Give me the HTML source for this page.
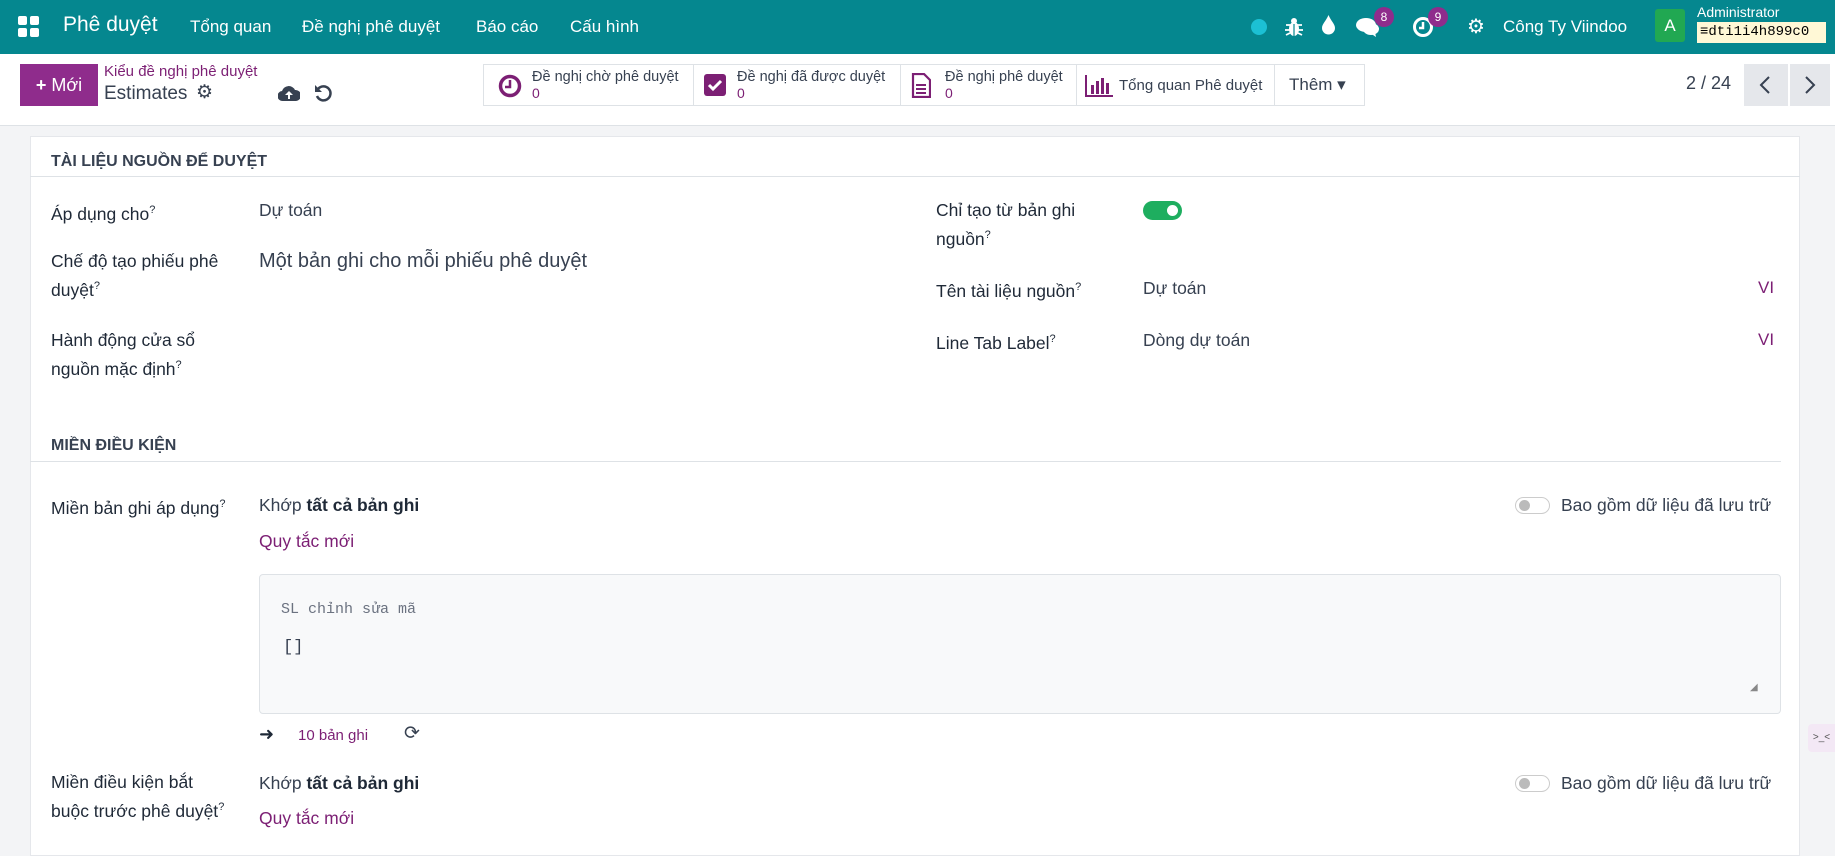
<!DOCTYPE html>
<html><head><meta charset="utf-8"><style>
*{box-sizing:border-box;margin:0;padding:0}
body{width:1835px;height:839px;overflow:hidden;background:#f3f4f6;font-family:"Liberation Sans",sans-serif;color:#374151;position:relative}
.a{position:absolute;white-space:nowrap}
.nav{position:absolute;left:0;top:0;width:1835px;height:54px;background:#05878f;color:#fff}
.nav .a{font-size:17px;top:17px}
.cp{position:absolute;left:0;top:54px;width:1835px;height:72px;background:#fff;border-bottom:1px solid #dee2e6}
.sheet{position:absolute;left:30px;top:136px;width:1770px;height:720px;background:#fff;border:1px solid #e5e7eb}
.lab{font-size:17.5px;color:#1f2937;line-height:25px}
.val{font-size:17.5px;color:#374151}
.sec{font-size:16px;font-weight:bold;color:#374151}
sup{font-size:11px}
.pur{color:#7c1f74}
.sb{position:absolute;top:64px;height:42px;border:1px solid #dee2e6;background:#fff}
.sb .t{position:absolute;font-size:14.5px;color:#374151;top:4px;white-space:nowrap}
.sb .n{position:absolute;font-size:14px;color:#7c1f74;top:20px}
.tog{position:absolute;width:35px;height:17px;border-radius:9px;border:1px solid #ccc;background:#fff}
.tog:after{content:"";position:absolute;left:3px;top:2px;width:11px;height:11px;border-radius:50%;background:#bbb}
.badge{position:absolute;width:20px;height:20px;border-radius:10px;background:#8f2c8c;color:#fff;font-size:12px;text-align:center;line-height:20px}
</style></head><body>
<div class="nav">
 <svg class="a" style="left:18px;top:16px" width="21" height="21" viewBox="0 0 21 21" fill="#fff"><rect x="0" y="0" width="9" height="9" rx="2"/><rect x="12" y="0" width="9" height="9" rx="2"/><rect x="0" y="12" width="9" height="9" rx="2"/><rect x="12" y="12" width="9" height="9" rx="2"/></svg>
 <div class="a" style="left:63px;top:13px;font-size:21px">Phê duyệt</div>
 <div class="a" style="left:190px">Tổng quan</div>
 <div class="a" style="left:302px">Đề nghị phê duyệt</div>
 <div class="a" style="left:476px">Báo cáo</div>
 <div class="a" style="left:570px">Cấu hình</div>
 <div class="a" style="left:1251px;top:19px;width:16px;height:16px;border-radius:50%;background:#1cc0d4"></div>
 <svg class="a" style="left:1285px;top:17px" width="18" height="20" viewBox="0 0 18 20"><ellipse cx="9" cy="12" rx="5" ry="7" fill="#fff"/><circle cx="9" cy="4" r="3" fill="#fff"/><path d="M1 8h16M0 13h18M1 18l4-2M17 18l-4-2" stroke="#fff" stroke-width="1.8"/><path d="M9 7v12" stroke="#05878f" stroke-width="1.2"/></svg>
 <svg class="a" style="left:1322px;top:15px" width="13" height="20" viewBox="0 0 13 20"><path d="M6.5 0C4 6 0 9 0 13a6.5 6.5 0 0013 0C13 9 9 6 6.5 0z" fill="#fff"/></svg>
 <svg class="a" style="left:1356px;top:17px" width="24" height="20" viewBox="0 0 24 20"><ellipse cx="10" cy="8" rx="10" ry="7" fill="#fff"/><ellipse cx="15" cy="12" rx="8" ry="6" fill="#fff"/><path d="M14 16l6 4-1-5z" fill="#fff"/></svg>
 <div class="badge" style="left:1374px;top:7px">8</div>
 <svg class="a" style="left:1412px;top:16px" width="22" height="22" viewBox="0 0 22 22"><circle cx="11" cy="11" r="8.5" fill="none" stroke="#fff" stroke-width="3"/><path d="M11 6v6h-4" stroke="#fff" stroke-width="2.5" fill="none"/></svg>
 <div class="badge" style="left:1428px;top:7px">9</div>
 <div class="a" style="left:1467px;top:14px;font-size:20px">⚙</div>
 <div class="a" style="left:1503px">Công Ty Viindoo</div>
 <div class="a" style="left:1655px;top:9px;width:30px;height:33px;background:#21a852;border-radius:3px;text-align:center;line-height:33px;font-size:17px">A</div>
 <div class="a" style="left:1697px;top:4px;font-size:14px">Administrator</div>
 <div class="a" style="left:1697px;top:22px;width:129px;height:21px;background:#fff8d6;color:#000;font-family:'Liberation Mono',monospace;font-size:14px;line-height:21px;padding-left:3px">≡dti1i4h899c0</div>
</div>
<div class="cp">
 <div class="a" style="left:20px;top:10px;width:78px;height:42px;background:#8f2c8c;color:#fff;font-size:18px;line-height:42px;text-align:center"><b>+</b> Mới</div>
 <div class="a pur" style="left:104px;top:9px;font-size:15px">Kiểu đề nghị phê duyệt</div>
 <div class="a" style="left:104px;top:29px;font-size:19px;color:#374151">Estimates</div>
 <div class="a" style="left:196px;top:27px;font-size:19px;color:#374151">⚙</div>
 <svg class="a" style="left:278px;top:31px" width="22" height="17" viewBox="0 0 22 17"><path d="M5 16a5 5 0 01-1-10 7 7 0 0113-1 5.5 5.5 0 011 11z" fill="#374151"/><path d="M11 6l-4 4h3v4h2v-4h3z" fill="#fff"/></svg>
 <svg class="a" style="left:314px;top:30px" width="18" height="18" viewBox="0 0 18 18"><path d="M4 5a7 7 0 11-1 7" fill="none" stroke="#374151" stroke-width="2.5"/><path d="M1 1v7h7z" fill="#374151"/></svg>
</div>
<div class="sb" style="left:483px;width:211px">
 <svg class="a" style="left:14px;top:9px" width="24" height="24" viewBox="0 0 24 24"><circle cx="12" cy="12" r="9.5" fill="none" stroke="#7c1f74" stroke-width="3.5"/><path d="M12 6v7h-5" stroke="#7c1f74" stroke-width="2.5" fill="none"/></svg>
 <div class="t" style="left:48px">Đề nghị chờ phê duyệt</div><div class="n" style="left:48px">0</div></div>
<div class="sb" style="left:693px;width:208px">
 <svg class="a" style="left:10px;top:9px" width="22" height="22" viewBox="0 0 22 22"><rect width="22" height="22" rx="3" fill="#7c1f74"/><path d="M5 11l4 4 8-8" stroke="#fff" stroke-width="3" fill="none"/></svg>
 <div class="t" style="left:43px">Đề nghị đã được duyệt</div><div class="n" style="left:43px">0</div></div>
<div class="sb" style="left:900px;width:177px">
 <svg class="a" style="left:10px;top:8px" width="20" height="25" viewBox="0 0 20 25"><path d="M2 1h11l6 6v17H2z" fill="none" stroke="#7c1f74" stroke-width="2.2"/><path d="M5 12h10M5 16h10M5 20h10" stroke="#7c1f74" stroke-width="2"/></svg>
 <div class="t" style="left:44px">Đề nghị phê duyệt</div><div class="n" style="left:44px">0</div></div>
<div class="sb" style="left:1076px;width:199px">
 <svg class="a" style="left:8px;top:10px" width="28" height="22" viewBox="0 0 28 22"><path d="M1 0v21h27" stroke="#7c1f74" stroke-width="2" fill="none"/><rect x="6" y="10" width="3" height="9" fill="#7c1f74"/><rect x="11" y="6" width="3" height="13" fill="#7c1f74"/><rect x="16" y="3" width="3" height="16" fill="#7c1f74"/><rect x="21" y="8" width="3" height="11" fill="#7c1f74"/></svg>
 <div class="t" style="left:42px;top:12px;font-size:15px">Tổng quan Phê duyệt</div></div>
<div class="sb" style="left:1274px;width:91px"><div class="t" style="left:14px;top:10px;font-size:17px">Thêm ▾</div></div>
<div class="a" style="left:1686px;top:73px;font-size:18px">2 / 24</div>
<div class="a" style="left:1744px;top:64px;width:44px;height:42px;background:#e5e7eb"><svg style="position:absolute;left:15px;top:12px" width="12" height="18" viewBox="0 0 12 18"><path d="M10 1L2 9l8 8" stroke="#374151" stroke-width="2" fill="none"/></svg></div>
<div class="a" style="left:1790px;top:64px;width:40px;height:42px;background:#e5e7eb"><svg style="position:absolute;left:14px;top:12px" width="12" height="18" viewBox="0 0 12 18"><path d="M2 1l8 8-8 8" stroke="#374151" stroke-width="2" fill="none"/></svg></div>

<div class="sheet"></div>
<div class="a sec" style="left:51px;top:153px">TÀI LIỆU NGUỒN ĐỂ DUYỆT</div>
<div class="a" style="left:30px;top:176px;width:1770px;height:1px;background:#dee2e6"></div>
<div class="a lab" style="left:51px;top:198px">Áp dụng cho<sup>?</sup></div>
<div class="a val" style="left:259px;top:200px">Dự toán</div>
<div class="a lab" style="left:51px;top:249px">Chế độ tạo phiếu phê<br>duyệt<sup>?</sup></div>
<div class="a val" style="left:259px;top:250px;font-size:20px">Một bản ghi cho mỗi phiếu phê duyệt</div>
<div class="a lab" style="left:51px;top:328px">Hành động cửa sổ<br>nguồn mặc định<sup>?</sup></div>
<div class="a lab" style="left:936px;top:198px">Chỉ tạo từ bản ghi<br>nguồn<sup>?</sup></div>
<div class="a" style="left:1143px;top:201px;width:39px;height:19px;border-radius:10px;background:#1eae5f"><div style="position:absolute;right:4px;top:4px;width:11px;height:11px;border-radius:50%;background:#fff"></div></div>
<div class="a lab" style="left:936px;top:275px">Tên tài liệu nguồn<sup>?</sup></div>
<div class="a val" style="left:1143px;top:278px">Dự toán</div>
<div class="a pur" style="left:1758px;top:278px;font-size:17px">VI</div>
<div class="a lab" style="left:936px;top:327px">Line Tab Label<sup>?</sup></div>
<div class="a val" style="left:1143px;top:330px">Dòng dự toán</div>
<div class="a pur" style="left:1758px;top:330px;font-size:17px">VI</div>

<div class="a sec" style="left:51px;top:437px">MIỀN ĐIỀU KIỆN</div>
<div class="a" style="left:30px;top:461px;width:1751px;height:1px;background:#dee2e6"></div>
<div class="a lab" style="left:51px;top:492px">Miền bản ghi áp dụng<sup>?</sup></div>
<div class="a val" style="left:259px;top:495px">Khớp <b style="color:#1f2937">tất cả bản ghi</b></div>
<div class="tog" style="left:1515px;top:497px"></div>
<div class="a val" style="left:1561px;top:495px">Bao gồm dữ liệu đã lưu trữ</div>
<div class="a pur" style="left:259px;top:531px;font-size:17.5px">Quy tắc mới</div>
<div class="a" style="left:259px;top:574px;width:1522px;height:140px;background:#f8f9fa;border:1px solid #dee2e6;border-radius:4px"></div>
<div class="a" style="left:281px;top:601px;font-family:'Liberation Mono',monospace;font-size:15px;color:#6b7280">SL chỉnh sửa mã</div>
<div class="a" style="left:283px;top:638px;font-family:'Liberation Mono',monospace;font-size:17px;color:#374151">[]</div>
<div class="a" style="left:1750px;top:682px;font-size:10px;color:#888">◢</div>
<div class="a" style="left:259px;top:724px;font-size:18px;color:#1f2937">➜</div>
<div class="a pur" style="left:298px;top:727px;font-size:15px">10 bản ghi</div>
<div class="a" style="left:404px;top:722px;font-size:19px;color:#374151">⟳</div>
<div class="a lab" style="left:51px;top:770px">Miền điều kiện bắt<br>buộc trước phê duyệt<sup>?</sup></div>
<div class="a val" style="left:259px;top:773px">Khớp <b style="color:#1f2937">tất cả bản ghi</b></div>
<div class="tog" style="left:1515px;top:775px"></div>
<div class="a val" style="left:1561px;top:773px">Bao gồm dữ liệu đã lưu trữ</div>
<div class="a pur" style="left:259px;top:808px;font-size:17.5px">Quy tắc mới</div>
<div class="a" style="left:1808px;top:724px;width:27px;height:28px;background:#f3e8f5;border-radius:4px 0 0 4px;font-size:10px;line-height:28px;text-align:center;color:#555">&gt;_&lt;</div>
</body></html>
